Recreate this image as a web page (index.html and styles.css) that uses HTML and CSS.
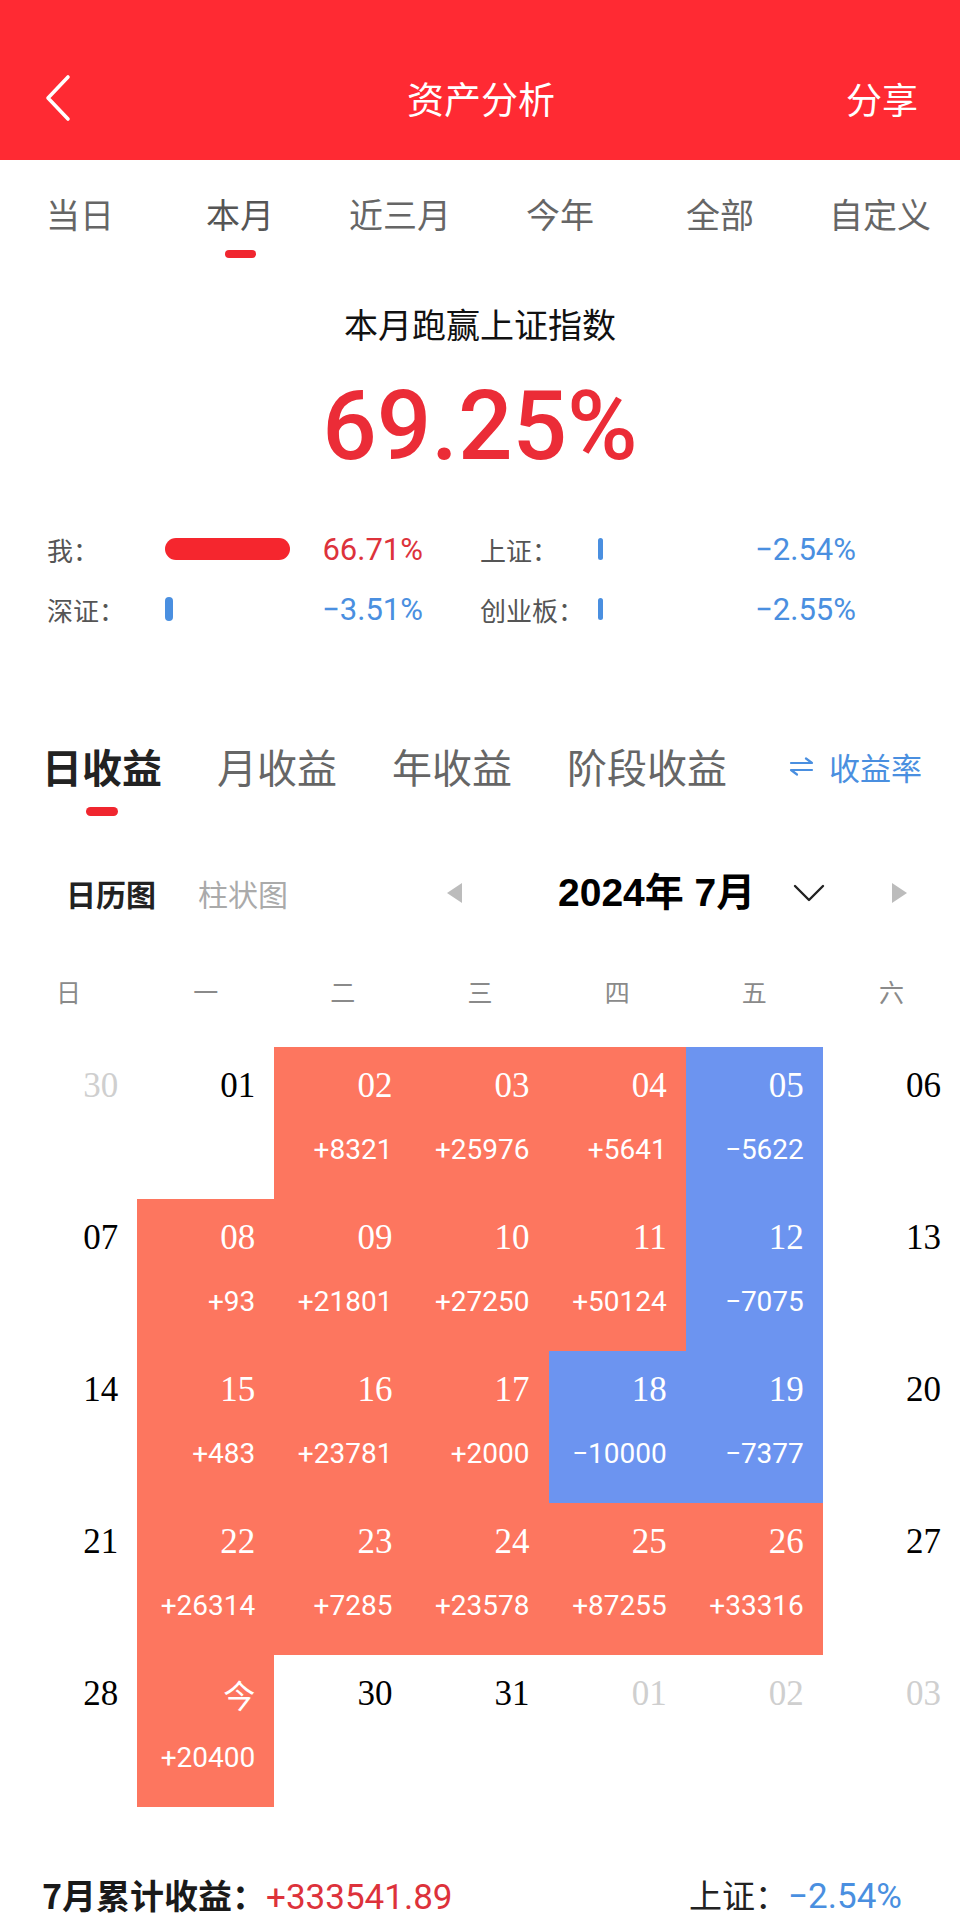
FILE: index.html
```html
<!DOCTYPE html>
<html lang="zh-CN">
<head>
<meta charset="utf-8">
<title>资产分析</title>
<link rel="stylesheet" href="styles.css">
</head>
<body>
<div class="page">
  <header class="header">
    <div class="header-row">
      <div class="back">
        <svg width="28" height="48" viewBox="0 0 28 48"><polyline points="24,3 4,24 24,45" fill="none" stroke="#fff" stroke-width="3.6" stroke-linecap="round" stroke-linejoin="round"/></svg>
      </div>
      <div class="title">资产分析</div>
      <div class="share">分享</div>
    </div>
  </header>

  <nav class="range-tabs">
    <div class="rtab">当日</div>
    <div class="rtab active">本月<span class="rbar"></span></div>
    <div class="rtab">近三月</div>
    <div class="rtab">今年</div>
    <div class="rtab">全部</div>
    <div class="rtab">自定义</div>
  </nav>

  <div class="headline">本月跑赢上证指数</div>
  <div class="big">69.25%</div>

  <div class="stats">
    <div class="stat">
      <span class="s-label">我：</span>
      <span class="s-barwrap"><span class="s-bar red"></span></span>
      <span class="s-val red-t">66.71%</span>
    </div>
    <div class="stat">
      <span class="s-label">上证：</span>
      <span class="s-barwrap"><span class="s-bar blue thin"></span></span>
      <span class="s-val blue-t">−2.54%</span>
    </div>
    <div class="stat">
      <span class="s-label">深证：</span>
      <span class="s-barwrap"><span class="s-bar blue"></span></span>
      <span class="s-val blue-t">−3.51%</span>
    </div>
    <div class="stat">
      <span class="s-label">创业板：</span>
      <span class="s-barwrap"><span class="s-bar blue thin"></span></span>
      <span class="s-val blue-t">−2.55%</span>
    </div>
  </div>

  <div class="section-tabs">
    <div class="stab active">日收益<span class="sbar"></span></div>
    <div class="stab">月收益</div>
    <div class="stab">年收益</div>
    <div class="stab">阶段收益</div>
    <div class="rate">
      <svg width="25" height="22" viewBox="0 0 25 22"><path d="M2 8H23L17 3.5" fill="none" stroke="#4a8fe0" stroke-width="2.2" stroke-linecap="round" stroke-linejoin="round"/><path d="M23 15H2L8 19.5" fill="none" stroke="#4a8fe0" stroke-width="2.2" stroke-linecap="round" stroke-linejoin="round"/></svg>
      <span>收益率</span>
    </div>
  </div>

  <div class="controls">
    <div class="modes">
      <div class="mode active">日历图</div>
      <div class="mode">柱状图</div>
    </div>
    <div class="nav">
      <span class="tri left"></span>
      <span class="month">2024年 7月</span>
      <svg class="chev" width="32" height="18" viewBox="0 0 32 18"><polyline points="2,2 16,16 30,2" fill="none" stroke="#222" stroke-width="2.4" stroke-linecap="round" stroke-linejoin="round"/></svg>
      <span class="tri right"></span>
    </div>
  </div>

  <div class="weekdays">
    <div>日</div><div>一</div><div>二</div><div>三</div><div>四</div><div>五</div><div>六</div>
  </div>

  <div class="calendar">
    <div class="cell muted"><div class="d">30</div></div>
    <div class="cell"><div class="d">01</div></div>
    <div class="cell up"><div class="d">02</div><div class="v">+8321</div></div>
    <div class="cell up"><div class="d">03</div><div class="v">+25976</div></div>
    <div class="cell up"><div class="d">04</div><div class="v">+5641</div></div>
    <div class="cell down"><div class="d">05</div><div class="v">−5622</div></div>
    <div class="cell"><div class="d">06</div></div>

    <div class="cell"><div class="d">07</div></div>
    <div class="cell up"><div class="d">08</div><div class="v">+93</div></div>
    <div class="cell up"><div class="d">09</div><div class="v">+21801</div></div>
    <div class="cell up"><div class="d">10</div><div class="v">+27250</div></div>
    <div class="cell up"><div class="d">11</div><div class="v">+50124</div></div>
    <div class="cell down"><div class="d">12</div><div class="v">−7075</div></div>
    <div class="cell"><div class="d">13</div></div>

    <div class="cell"><div class="d">14</div></div>
    <div class="cell up"><div class="d">15</div><div class="v">+483</div></div>
    <div class="cell up"><div class="d">16</div><div class="v">+23781</div></div>
    <div class="cell up"><div class="d">17</div><div class="v">+2000</div></div>
    <div class="cell down"><div class="d">18</div><div class="v">−10000</div></div>
    <div class="cell down"><div class="d">19</div><div class="v">−7377</div></div>
    <div class="cell"><div class="d">20</div></div>

    <div class="cell"><div class="d">21</div></div>
    <div class="cell up"><div class="d">22</div><div class="v">+26314</div></div>
    <div class="cell up"><div class="d">23</div><div class="v">+7285</div></div>
    <div class="cell up"><div class="d">24</div><div class="v">+23578</div></div>
    <div class="cell up"><div class="d">25</div><div class="v">+87255</div></div>
    <div class="cell up"><div class="d">26</div><div class="v">+33316</div></div>
    <div class="cell"><div class="d">27</div></div>

    <div class="cell"><div class="d">28</div></div>
    <div class="cell up"><div class="d today">今</div><div class="v">+20400</div></div>
    <div class="cell"><div class="d">30</div></div>
    <div class="cell"><div class="d">31</div></div>
    <div class="cell muted"><div class="d">01</div></div>
    <div class="cell muted"><div class="d">02</div></div>
    <div class="cell muted"><div class="d">03</div></div>
  </div>

  <div class="footer">
    <div class="f-left"><span class="f-label">7月累计收益：</span><span class="f-num red-t">+333541.89</span></div>
    <div class="f-right"><span class="f-idx">上证：</span><span class="f-num blue-t">−2.54%</span></div>
  </div>
</div>
</body>
</html>
```

FILE: styles.css
```css
html, body {
  margin: 0;
  padding: 0;
  background: #fff;
}
body {
  font-family: "Noto Sans CJK SC", "Noto Sans", sans-serif;
  color: #222;
}
.page {
  width: 960px;
}

/* header */
.header {
  background: #ff2a33;
  height: 160px;
  box-sizing: border-box;
  padding-top: 56px;
}
.header-row {
  height: 84px;
  display: grid;
  grid-template-columns: 1fr auto 1fr;
  align-items: center;
  padding: 0 42px 0 44px;
}
.back {
  display: flex;
  align-items: center;
}
.title {
  color: #fff;
  font-size: 37px;
  line-height: 44px;
}
.share {
  color: #fff;
  font-size: 36px;
  line-height: 44px;
  justify-self: end;
}

/* range tabs */
.range-tabs {
  display: grid;
  grid-template-columns: repeat(6, 1fr);
  height: 114px;
}
.rtab {
  display: flex;
  flex-direction: column;
  align-items: center;
  padding-top: 33px;
  font-size: 34px;
  line-height: 42px;
  color: #666;
  white-space: nowrap;
}
.rtab.active {
  color: #555;
}
.rbar {
  display: block;
  width: 31px;
  height: 8px;
  border-radius: 4px;
  background: #f0262f;
  margin-top: 15px;
}

.headline {
  text-align: center;
  font-size: 34px;
  line-height: 40px;
  padding-top: 30px;
  color: #111;
}
.big {
  text-align: center;
  font-family: "Roboto", "Noto Sans", sans-serif;
  font-weight: 500;
  font-size: 96px;
  line-height: 110px;
  margin-top: 27px;
  color: #eb2c37;
}

/* stats */
.stats {
  margin-top: 38px;
  padding-left: 47px;
  display: grid;
  grid-template-columns: 376px 376px;
  column-gap: 57px;
}
.stat {
  display: grid;
  grid-template-columns: 118px 150px 108px;
  align-items: center;
  height: 60px;
}
.s-label {
  font-size: 26px;
  color: #555;
  white-space: nowrap;
}
.s-barwrap {
  display: flex;
  align-items: center;
}
.s-bar {
  display: block;
  height: 24px;
  border-radius: 5px;
}
.s-bar.red {
  width: 125px;
  height: 22px;
  border-radius: 11px;
  background: #f5262e;
}
.s-bar.blue {
  width: 8px;
  background: #4a8fe0;
}
.s-bar.thin {
  width: 5px;
  height: 22px;
  border-radius: 3px;
}
.s-val {
  text-align: right;
  font-family: "Roboto", "Noto Sans", sans-serif;
  font-size: 31px;
  white-space: nowrap;
}
.red-t { color: #dd323b; }
.blue-t { color: #4a8fe0; }

/* section tabs */
.section-tabs {
  margin-top: 102px;
  display: flex;
  align-items: flex-start;
  padding: 0 38px 0 42px;
}
.stab {
  flex: none;
  display: flex;
  flex-direction: column;
  align-items: center;
  font-size: 40px;
  line-height: 50px;
  color: #666;
  white-space: nowrap;
  margin-right: 55px;
}
.stab.active {
  color: #222;
  font-weight: 700;
}
.sbar {
  display: block;
  width: 32px;
  height: 9px;
  border-radius: 5px;
  background: #f0262f;
  margin-top: 16px;
}
.rate {
  flex: none;
  margin-left: auto;
  display: flex;
  align-items: center;
  gap: 15px;
  height: 50px;
  color: #4a8fe0;
  font-size: 31px;
  white-space: nowrap;
}

/* controls */
.controls {
  margin-top: 55px;
  display: flex;
  align-items: center;
  height: 44px;
  padding-left: 66px;
}
.modes {
  flex: none;
  display: flex;
  align-items: center;
  gap: 42px;
  width: 381px;
}
.mode {
  font-size: 30px;
  color: #aaa;
  white-space: nowrap;
}
.mode.active {
  color: #222;
  font-weight: 700;
}
.nav {
  flex: none;
  display: flex;
  align-items: center;
}
.tri {
  display: block;
  width: 0;
  height: 0;
  border-top: 10px solid transparent;
  border-bottom: 10px solid transparent;
}
.tri.left {
  border-right: 15px solid #bcbcbc;
}
.tri.right {
  border-left: 15px solid #bcbcbc;
}
.month {
  font-family: "Liberation Sans", "Noto Sans CJK SC", sans-serif;
  font-weight: 700;
  font-size: 39px;
  line-height: 44px;
  color: #000;
  margin-left: 96px;
  white-space: nowrap;
}
.chev {
  margin-left: 38px;
}
.tri.right {
  margin-left: 67px;
}

/* weekdays */
.weekdays {
  margin-top: 59px;
  display: grid;
  grid-template-columns: repeat(7, 1fr);
  text-align: center;
  font-size: 25px;
  line-height: 34px;
  color: #8a8a8a;
}

/* calendar */
.calendar {
  margin-top: 39px;
  display: grid;
  grid-template-columns: repeat(7, 1fr);
  grid-auto-rows: 152px;
}
.cell {
  box-sizing: border-box;
  padding: 19px 19px 0 0;
  text-align: right;
  color: #000;
}
.cell.up {
  background: #fd765f;
  color: #fff;
}
.cell.down {
  background: #6c94f0;
  color: #fff;
}
.cell.muted {
  color: #cfcfcf;
}
.d {
  font-family: "Liberation Serif", "DejaVu Serif", serif;
  font-size: 35px;
  line-height: 40px;
}
.d.today {
  font-family: "Noto Sans CJK SC", sans-serif;
  font-size: 32px;
}
.v {
  margin-top: 27px;
  font-family: "Roboto", "Noto Sans", sans-serif;
  font-size: 28px;
  line-height: 34px;
  white-space: nowrap;
}

/* footer */
.footer {
  margin-top: 65px;
  height: 44px;
  display: flex;
  align-items: center;
  justify-content: space-between;
  padding: 0 58px 0 42px;
  white-space: nowrap;
}
.f-label {
  font-size: 34px;
  font-weight: 700;
  color: #1a1a1a;
}
.f-idx {
  font-size: 33px;
  color: #222;
}
.f-num {
  font-family: "Roboto", "Noto Sans", sans-serif;
  font-size: 35px;
}
```
